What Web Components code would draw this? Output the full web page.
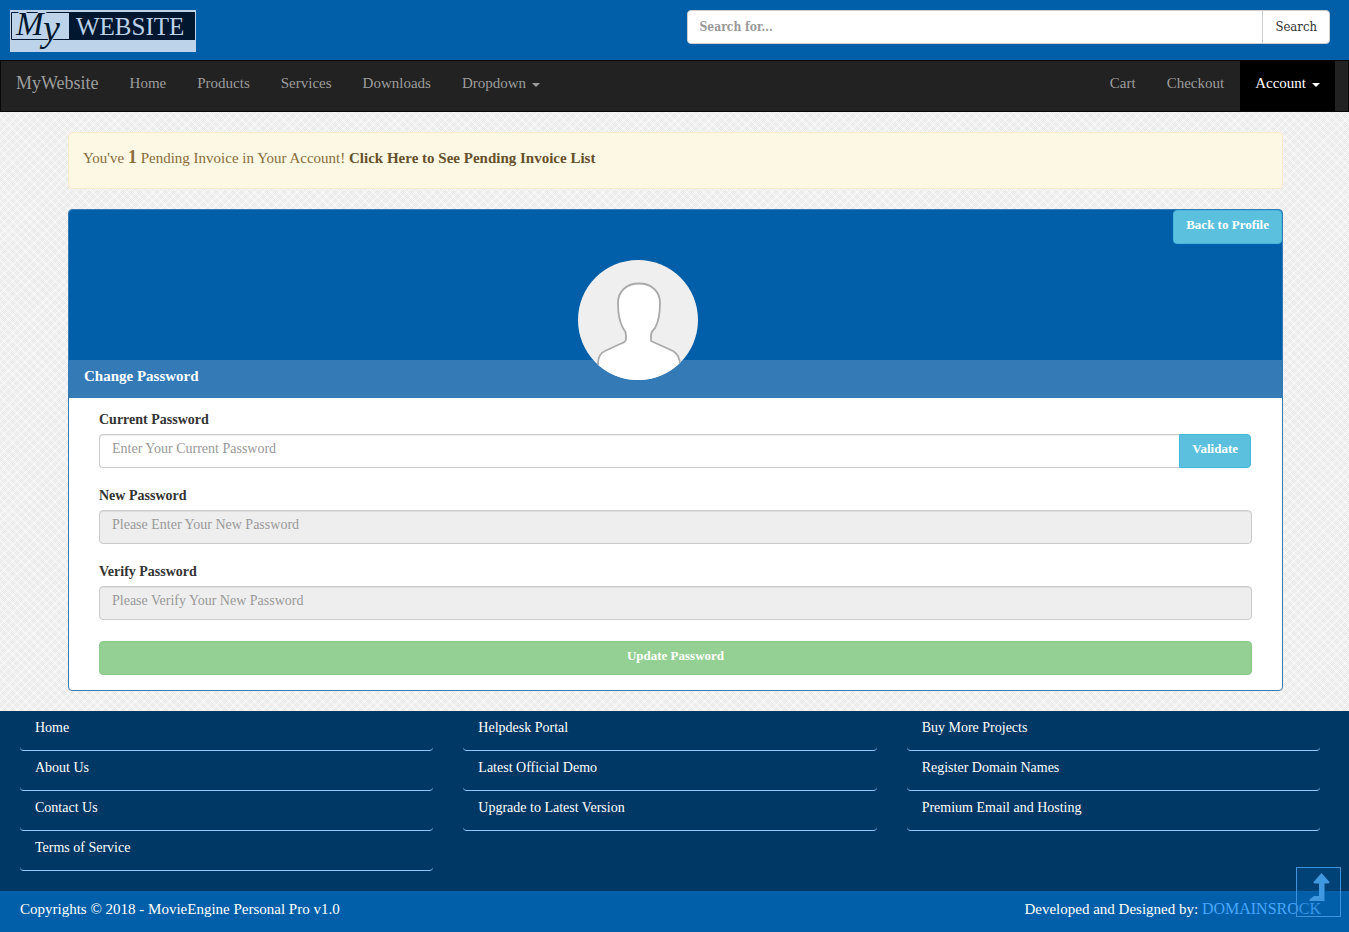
<!DOCTYPE html>
<html lang="en">
<head>
<meta charset="utf-8">
<meta name="viewport" content="width=device-width, initial-scale=1">
<title>MyWebsite - Change Password</title>
<style>
  html { height: 100%; }
  body {
    margin: 0;
    min-height: 100%;
    font: 15px/20px "Liberation Serif", serif;
    color: #333;
    background-color: #ececec;
    background-image:
      repeating-linear-gradient(45deg, rgba(255,255,255,.35) 0 2px, transparent 2px 6px),
      repeating-linear-gradient(-45deg, rgba(255,255,255,.35) 0 2px, transparent 2px 6px),
      repeating-conic-gradient(#e6e6e6 0 25%, #f3f3f3 0 50%);
    background-size: auto, auto, 2px 2px;
  }
</style>
</head>
<body>
<my-page></my-page>
<script>
function define(name, html, setup) {
  const template = document.createElement('template');
  template.innerHTML = '<style>*{box-sizing:border-box}a{text-decoration:none;color:inherit}</style>' + html;
  customElements.define(name, class extends HTMLElement {
    constructor() {
      super();
      this.attachShadow({ mode: 'open' }).append(template.content.cloneNode(true));
    }
    connectedCallback() { if (setup) setup(this, this.shadowRoot); }
  });
}

define('site-logo', `
  <style>
    :host { display: block; width: 186px; height: 42px; }
    svg { display: block; overflow: visible; }
    text { font-family: "Liberation Serif", serif; }
  </style>
  <a href="#" aria-label="My Website">
  <svg width="186" height="42" viewBox="0 0 186 42">
    <rect width="186" height="42" fill="#bcd3e9"/>
    <path d="M1.5 2.500H184.500V29.500H1.500Z" fill="none" stroke="#01172f" stroke-width="1"/>
    <rect x="59" y="2" width="126" height="28" fill="#01172f"/>
    <g fill="#01172f" stroke="#bcd3e9" stroke-width="2" paint-order="stroke" font-style="italic">
      <text x="6" y="25" font-size="33">M</text>
      <text x="33" y="31" font-size="38">y</text>
    </g>
    <text x="66" y="25" font-size="25" fill="#bcd3e9">WEBSITE</text>
  </svg>
  </a>`);

define('search-box', `
  <style>
    :host { display: block; }
    form { display: flex; margin: 0; }
    input, button { height: 34px; border: 1px solid #ccc; background: #fff; font: 12px/20px "DejaVu Serif Condensed", "DejaVu Serif", serif; }
    input { flex: 1; min-width: 0; padding: 6px 12px; border-radius: 4px 0 0 4px; font-weight: bold; font-stretch: condensed; }
    input::placeholder { color: #999; opacity: 1; }
    button { padding: 6px 12px; margin-left: -1px; color: #333; border-radius: 0 4px 4px 0; font-size: 13px; }
  </style>
  <form><input type="search" placeholder="Search for..." aria-label="Search for"><button type="button">Search</button></form>`);

define('site-header', `
  <style>
    :host { display: grid; grid-template-columns: 1fr 1fr; background: #005fa8; height: 60px; padding: 10px 0; }
    site-logo { margin-left: 10px; }
    search-box { padding: 0 19px 0 12px; }
  </style>
  <site-logo></site-logo><search-box></search-box>`);

define('nav-item', `
  <style>
    :host { display: block; }
    a { display: flex; align-items: center; height: 50px; padding: 0 15px 6px; color: #9d9d9d; font-size: 15px; }
    :host([active]) a { background: #000; color: #fff; }
    :host([brand]) a { font-size: 18px; }
    i { display: none; margin: 4px 0 0 6px; border: 4px solid transparent; border-top-color: currentColor; border-bottom: 0; }
    :host([caret]) i { display: block; }
  </style>
  <a href="#"><slot></slot><i></i></a>`);

define('nav-bar', `
  <style>
    :host { display: flex; gap: 1px; background: #222; border: 1px solid #080808; padding-right: 13px; }
    span { flex: 1; }
  </style>
  <nav-item brand>MyWebsite</nav-item>
  <nav-item>Home</nav-item><nav-item>Products</nav-item><nav-item>Services</nav-item>
  <nav-item>Downloads</nav-item><nav-item caret>Dropdown</nav-item>
  <span></span>
  <nav-item>Cart</nav-item><nav-item>Checkout</nav-item><nav-item caret active>Account</nav-item>`);

define('alert-box', `
  <style>
    :host { display: block; background: #fcf8e3; border: 1px solid #faebcc; border-radius: 4px; color: #8a6d3b; padding: 15px 14px 20px; }
    p { margin: 0; }
    strong { font-size: 18px; line-height: 1; }
    a { color: #66512c; font-weight: bold; }
  </style>
  <p>You've <strong>1</strong> Pending Invoice in Your Account! <a href="#">Click Here to See Pending Invoice List</a></p>`);

define('user-avatar', `
  <style>:host { display: block; width: 120px; height: 120px; } svg { display: block; }</style>
  <svg width="120" height="120" viewBox="0 0 120 120" role="img" aria-label="Profile picture">
    <defs><clipPath id="c"><circle cx="60" cy="60" r="60"/></clipPath></defs>
    <g clip-path="url(#c)">
      <rect width="120" height="120" fill="#efefef"/>
      <path d="M20 122V104C20 98 22 93 27 91L42 84Q48 82 48 79V75Q48 72 45 68C41 61 40 52 40 43C40 31 49 23.500 61 23.500S82 31 82 43C82 52 81 61 77 68Q73 72 73 75V81L95 91C100 94 102 98 102 105V122Z" fill="#fff" stroke="#aaa" stroke-width="1.800"/>
    </g>
  </svg>`);

define('ui-button', `
  <style>
    :host { display: block; }
    button { width: 100%; height: 34px; padding: 0 12px 4px; font: bold 13px/20px "Liberation Serif", serif; color: #fff; background: #5bc0de; border: 1px solid #46b8da; border-radius: 4px; }
    :host([attached]) button { border-radius: 0 4px 4px 0; }
    :host([success]) button { background: #5cb85c; border-color: #4cae4c; opacity: .65; }
  </style>
  <button type="button"><slot></slot></button>`,
  (host, root) => { if (host.hasAttribute('success')) root.querySelector('button').disabled = true; });

define('form-field', `
  <style>
    :host { display: block; margin-bottom: 18px; }
    label { display: block; font-weight: bold; font-size: 14px; line-height: 20px; margin-bottom: 4px; }
    div { display: flex; }
    input { flex: 1; min-width: 0; height: 34px; padding: 0 12px 4px; font: 14px/20px "Liberation Serif", serif; color: #555; background: #fff; border: 1px solid #ccc; border-radius: 4px; box-shadow: inset 0 1px 1px rgba(0,0,0,.075); }
    input:disabled { background: #eee; }
    input::placeholder { color: #999; opacity: 1; }
    :host([addon]) { padding-right: 1px; }
    :host([addon]) input { border-radius: 4px 0 0 4px; border-right: 0; }
  </style>
  <label for="f"></label>
  <div><input id="f" type="password"><slot></slot></div>`,
  (host, root) => {
    root.querySelector('label').textContent = host.getAttribute('label');
    const input = root.querySelector('input');
    input.placeholder = host.getAttribute('hint');
    input.disabled = host.hasAttribute('locked');
  });

define('password-panel', `
  <style>
    :host { display: block; background: #fff; border: 1px solid #337ab7; border-radius: 4px; }
    header { display: flow-root; background: #005fa8; height: 150px; position: relative; border-radius: 3px 3px 0 0; }
    header ui-button { width: max-content; margin-left: auto; }
    user-avatar { position: absolute; top: 50px; left: calc(50% - 98px); }
    h1 { margin: 0; background: #337ab7; color: #fff; font-size: 15px; line-height: 20px; padding: 6px 15px 12px; }
    form { margin: 0; padding: 12px 30px 15px; }
    form > ui-button { margin-top: 21px; }
  </style>
  <header>
    <ui-button>Back to Profile</ui-button>
    <user-avatar></user-avatar>
  </header>
  <h1>Change Password</h1>
  <form>
    <form-field label="Current Password" hint="Enter Your Current Password" addon><ui-button attached>Validate</ui-button></form-field>
    <form-field label="New Password" hint="Please Enter Your New Password" locked></form-field>
    <form-field label="Verify Password" hint="Please Verify Your New Password" locked></form-field>
    <ui-button success>Update Password</ui-button>
  </form>`);

define('footer-link', `
  <style>
    :host { display: block; }
    a { display: block; height: 40px; padding: 7px 15px 12px; color: #fff; font-size: 14px; line-height: 20px; border-bottom: 1px solid #8fc7ff; border-radius: 4px; }
  </style>
  <a href="#"><slot></slot></a>`);

define('site-footer', `
  <style>
    :host { display: block; color: #fff; }
    nav { display: grid; grid-template-columns: repeat(3, 1fr); gap: 30px; padding: 0 29px 20px 20px; background: #003865; }
    footer { display: flex; justify-content: space-between; padding: 8px 28px 13px 20px; background: #005fa8; font-size: 15px; line-height: 20px; }
    footer a { color: #47a8ff; font-size: 16px; line-height: 1; }
  </style>
  <nav>
    <div><footer-link>Home</footer-link><footer-link>About Us</footer-link><footer-link>Contact Us</footer-link><footer-link>Terms of Service</footer-link></div>
    <div><footer-link>Helpdesk Portal</footer-link><footer-link>Latest Official Demo</footer-link><footer-link>Upgrade to Latest Version</footer-link></div>
    <div><footer-link>Buy More Projects</footer-link><footer-link>Register Domain Names</footer-link><footer-link>Premium Email and Hosting</footer-link></div>
  </nav>
  <footer><span>Copyrights © 2018 - MovieEngine Personal Pro v1.0</span><span>Developed and Designed by: <a href="#">DOMAINSROCK</a></span></footer>`);

define('back-to-top', `
  <style>
    :host { display: block; position: fixed; right: 8px; bottom: 15px; }
    a { display: block; width: 45px; height: 50px; border: 1px solid #3d94dc; background: rgba(0,95,168,.25); }
    svg { display: block; }
  </style>
  <a href="#" aria-label="Back to top"><svg width="43" height="48" viewBox="0 0 43 48"><path d="M24.500 5L32.500 14Q32.500 15.500 31 15.500H27.500V33H12.500Q12 32 13 31L17 28H22V15.500H18Q16.500 15.500 16.500 14Z" fill="#4098e0"/></svg></a>`);

define('my-page', `
  <style>
    :host { display: block; }
    main { display: grid; gap: 20px; padding: 20px 66px 20px 68px; }
  </style>
  <site-header></site-header>
  <nav-bar></nav-bar>
  <main><alert-box></alert-box><password-panel></password-panel></main>
  <site-footer></site-footer>
  <back-to-top></back-to-top>`);
</script>
</body>
</html>
